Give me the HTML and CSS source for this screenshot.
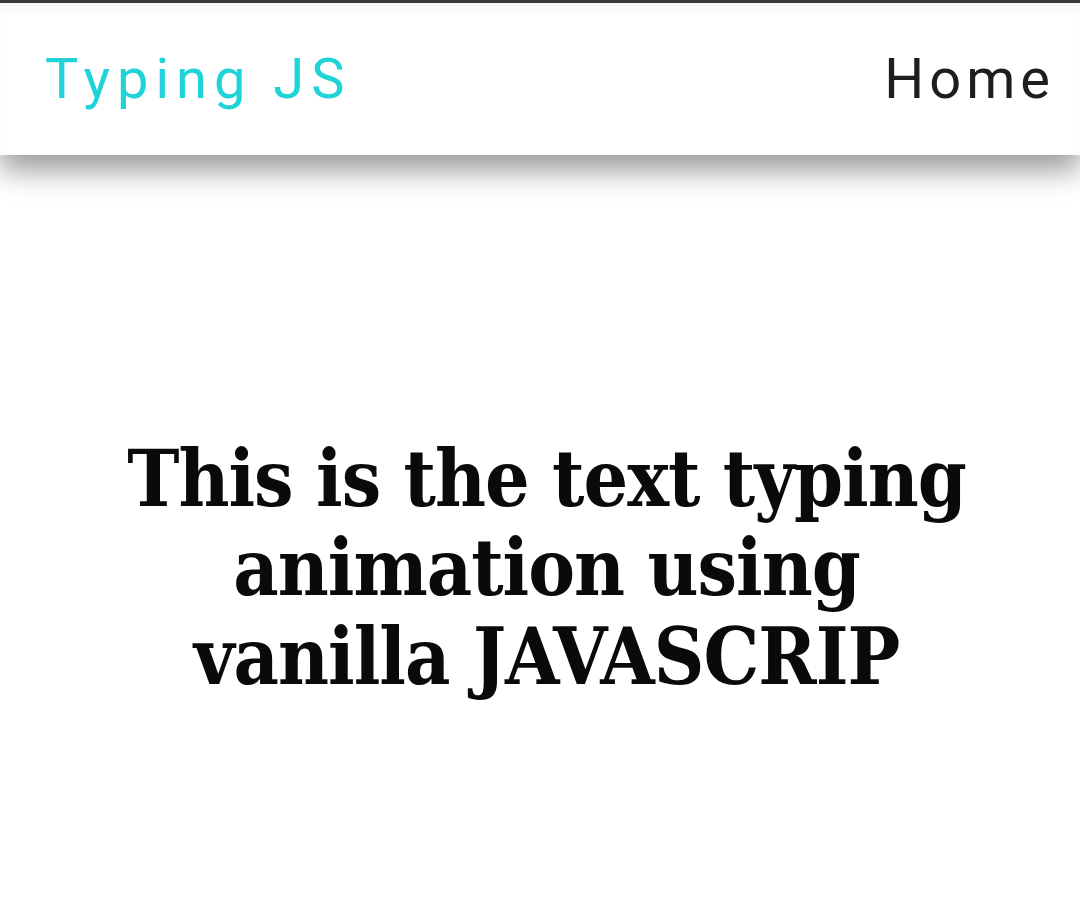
FILE: index.html
```html
<!DOCTYPE html>
<html lang="en">
<head>
<meta charset="utf-8">
<title>Typing JS</title>
<link rel="stylesheet" href="styles.css">
</head>
<body>
<div class="topline"></div>
<nav class="navbar">
  <a class="brand" href="#">Typing JS</a>
  <a class="nav-link" href="#">Home</a>
</nav>
<main class="hero">
  <h1 class="typing">This is the text typing animation using vanilla JAVASCRIP</h1>
</main>
</body>
</html>
```

FILE: styles.css
```css
html, body {
  margin: 0;
  padding: 0;
  background: #ffffff;
}
body {
  font-family: Roboto, "Noto Sans", sans-serif;
}
.topline {
  height: 3px;
  background: #3a3a3a;
}
.navbar {
  height: 152px;
  display: flex;
  align-items: center;
  justify-content: space-between;
  padding: 0 25px 0 45px;
  background: #ffffff;
  box-shadow: 0 16px 26px rgba(0, 0, 0, 0.38), inset 0 10px 14px -8px rgba(0, 0, 0, 0.08);
  position: relative;
  z-index: 1;
}
.brand, .nav-link {
  font-family: Roboto, sans-serif;
  font-size: 56px;
  text-decoration: none;
  line-height: 1;
}
.brand {
  color: #1fd3d8;
  letter-spacing: 7px;
}
.nav-link {
  color: #1e1e1e;
  letter-spacing: 5px;
}
.hero {
  display: flex;
  justify-content: center;
  padding-top: 279px;
  padding-left: 13px;
}
.typing {
  margin: 0;
  width: 900px;
  text-align: center;
  font-family: "DejaVu Serif Condensed", "DejaVu Serif", serif;
  font-weight: bold;
  font-size: 78px;
  letter-spacing: -1px;
  line-height: 89px;
  color: #0a0a0a;
}
```
